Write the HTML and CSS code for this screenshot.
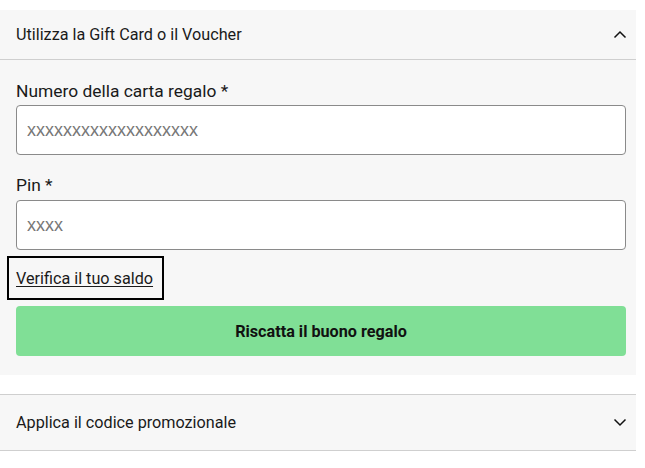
FILE: index.html
```html
<!DOCTYPE html>
<html lang="it">
<head>
<meta charset="utf-8">
<title>Gift Card</title>
<link rel="stylesheet" href="styles.css">
</head>
<body>
<div class="wrap">
  <section class="panel open">
    <div class="panel-head">
      <span class="panel-title">Utilizza la Gift Card o il Voucher</span>
      <svg class="chev" width="14" height="9" viewBox="0 0 14 9"><path d="M1.5 7.5 L7 2 L12.5 7.5" fill="none" stroke="#111" stroke-width="1.5"/></svg>
    </div>
    <div class="panel-body">
      <label class="field-label">Numero della carta regalo *</label>
      <input class="field" type="text" placeholder="xxxxxxxxxxxxxxxxxxx">
      <label class="field-label pin">Pin *</label>
      <input class="field" type="text" placeholder="xxxx">
      <div class="check-row"><a class="check" href="#">Verifica il tuo saldo</a></div>
      <button class="redeem" type="button">Riscatta il buono regalo</button>
    </div>
  </section>
  <section class="panel closed">
    <div class="panel-head">
      <span class="panel-title">Applica il codice promozionale</span>
      <svg class="chev" width="14" height="9" viewBox="0 0 14 9"><path d="M1.5 1.5 L7 7 L12.5 1.5" fill="none" stroke="#111" stroke-width="1.5"/></svg>
    </div>
  </section>
</div>
</body>
</html>
```
FILE: styles.css
```css
html, body {
  margin: 0;
  padding: 0;
  background: #fff;
}
body {
  font-family: Roboto, "Liberation Sans", sans-serif;
  color: #1a1a1a;
}
.wrap {
  width: 636px;
  padding-top: 10px;
  display: flex;
  flex-direction: column;
  gap: 19px;
}
.panel {
  background: #f7f7f7;
}
.panel-head {
  height: 49px;
  display: flex;
  align-items: center;
  justify-content: space-between;
  padding: 0 9px 0 16px;
  border-bottom: 1px solid #cfcfcf;
}
.panel-title {
  font-size: 16.2px;
}
.chev {
  display: block;
}
.panel-body {
  padding: 18px 10px 19px 16px;
  display: flex;
  flex-direction: column;
}
.field-label {
  font-size: 17.4px;
  line-height: 26px;
  margin-bottom: 1px;
}
.field-label.pin {
  margin-top: 17px;
  margin-bottom: 2px;
}
.field {
  height: 50px;
  box-sizing: border-box;
  border: 1px solid #8a8a8a;
  border-radius: 4px;
  background: #fff;
  padding: 0 10px;
  font-family: "Liberation Sans", Arial, sans-serif;
  font-size: 18px;
  color: #222;
}
.field::placeholder {
  color: #777;
}
.check-row {
  margin: 6px 0 6px -9px;
  display: flex;
}
.check {
  border: 2px solid #000;
  padding: 0 9px 0 7px;
  height: 40px;
  display: flex;
  align-items: center;
  font-size: 16.2px;
  color: #1a1a1a;
  text-decoration: underline;
  text-underline-offset: 2px;
}
.redeem {
  height: 50px;
  border: none;
  border-radius: 4px;
  background: #80df96;
  font-family: Roboto, "Liberation Sans", sans-serif;
  font-size: 16.2px;
  font-weight: 700;
  color: #111;
}
.panel.closed {
  border-top: 1px solid #cfcfcf;
}
.panel.closed .panel-head {
  height: 55px;
}
```
